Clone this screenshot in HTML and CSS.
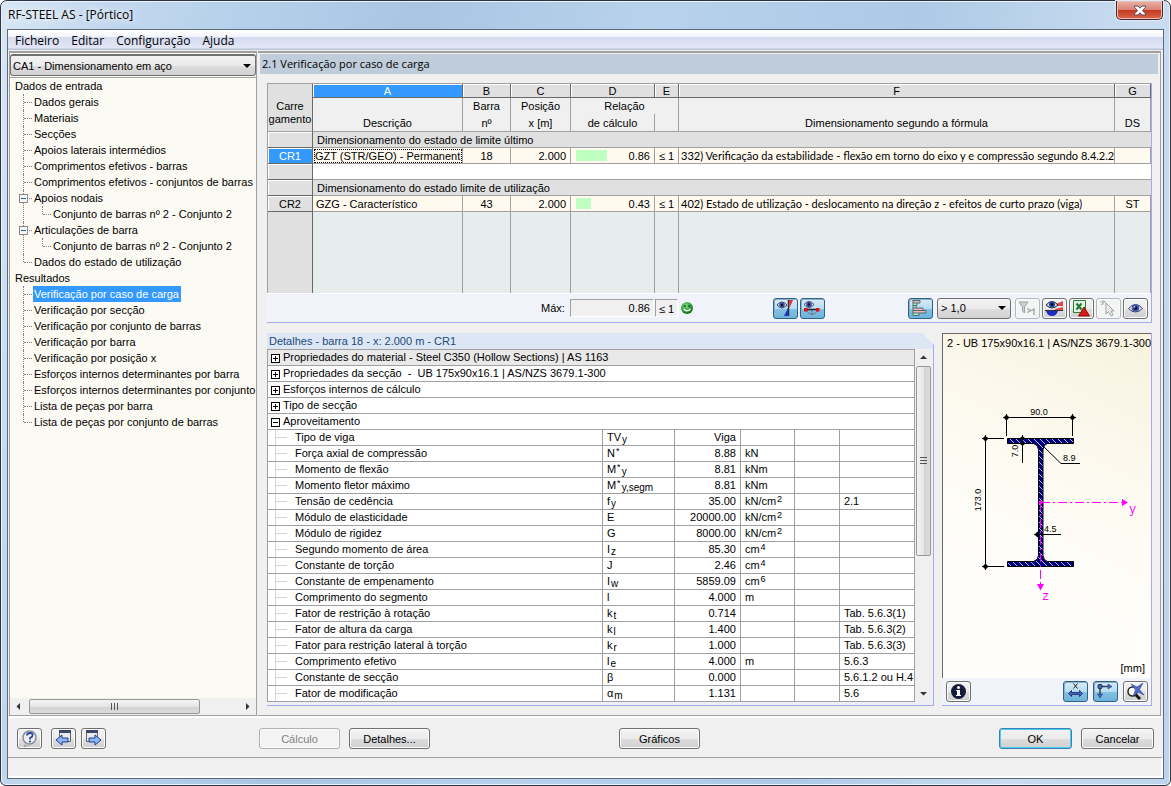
FILE: index.html
```html
<!DOCTYPE html>
<html lang="pt">
<head>
<meta charset="utf-8">
<title>RF-STEEL AS - [Pórtico]</title>
<link rel="stylesheet" href="styles.css">
</head>
<body>
<div class="window">
  <header class="titlebar">
    <h1>RF-STEEL AS - [Pórtico]</h1>
    <button class="close" aria-label="Fechar"><svg width="14" height="11" viewBox="0 0 14 11"><path d="M1.500 1h3.500l2 2.200 2-2.200h3.500v1.200l-3 3.300 3 3.300V10H9L7 7.800 5 10H1.500V8.800l3-3.300-3-3.300z" fill="#fff" stroke="#5a4a58"/></svg></button>
  </header>
  <div class="client">
    <nav class="menu">
      <button>Ficheiro</button><button>Editar</button><button>Configuração</button><button>Ajuda</button>
    </nav>
    <main class="main">
      <aside class="side">
        <select class="case" aria-label="Caso de cálculo"><option>CA1 - Dimensionamento em aço</option></select>
        <div class="treebox">
          <ul class="tree">
            <li><a href="#">Dados de entrada</a>
              <ul class="branch">
                <li><a href="#">Dados gerais</a></li>
                <li><a href="#">Materiais</a></li>
                <li><a href="#">Secções</a></li>
                <li><a href="#">Apoios laterais intermédios</a></li>
                <li><a href="#">Comprimentos efetivos - barras</a></li>
                <li><a href="#">Comprimentos efetivos - conjuntos de barras</a></li>
                <li><button class="fold" aria-label="Recolher Apoios nodais"></button><a href="#">Apoios nodais</a>
                  <ul class="branch leaf"><li><a href="#">Conjunto de barras nº 2 - Conjunto 2</a></li></ul></li>
                <li><button class="fold" aria-label="Recolher Articulações de barra"></button><a href="#">Articulações de barra</a>
                  <ul class="branch leaf"><li><a href="#">Conjunto de barras nº 2 - Conjunto 2</a></li></ul></li>
                <li><a href="#">Dados do estado de utilização</a></li>
              </ul>
            </li>
            <li><a href="#">Resultados</a>
              <ul class="branch">
                <li><a href="#" class="current">Verificação por caso de carga</a></li>
                <li><a href="#">Verificação por secção</a></li>
                <li><a href="#">Verificação por conjunto de barras</a></li>
                <li><a href="#">Verificação por barra</a></li>
                <li><a href="#">Verificação por posição x</a></li>
                <li><a href="#">Esforços internos determinantes por barra</a></li>
                <li><a href="#">Esforços internos determinantes por conjunto</a></li>
                <li><a href="#">Lista de peças por barra</a></li>
                <li><a href="#">Lista de peças por conjunto de barras</a></li>
              </ul>
            </li>
          </ul>
          <div class="hscroll">
            <svg width="17" height="15" viewBox="0 0 17 15"><path d="M10 4v7L6.500 7.500z" fill="#333"/></svg>
            <span class="hthumb"><i></i><i></i><i></i></span>
            <svg class="end" width="17" height="15" viewBox="0 0 17 15"><path d="M7 4v7l3.500-3.500z" fill="#333"/></svg>
          </div>
        </div>
      </aside>

      <section class="content">
        <h2 class="heading">2.1 Verificação por caso de carga</h2>

        <div class="results">
          <table class="grid">
            <colgroup><col class="c-load"><col class="c-a"><col class="c-b"><col class="c-c"><col class="c-d"><col class="c-e"><col><col class="c-g"></colgroup>
            <thead>
              <tr class="letters"><th rowspan="3" class="corner">Carre<br>gamento</th><th class="picked">A</th><th>B</th><th>C</th><th>D</th><th>E</th><th>F</th><th>G</th></tr>
              <tr class="names"><th></th><th>Barra</th><th>Posição</th><th colspan="2">Relação</th><th></th><th></th></tr>
              <tr class="names last"><th>Descrição</th><th>nº</th><th>x [m]</th><th>de cálculo</th><th></th><th>Dimensionamento segundo a fórmula</th><th>DS</th></tr>
            </thead>
            <tbody>
              <tr class="group"><th></th><td colspan="7">Dimensionamento do estado de limite último</td></tr>
              <tr class="data"><th class="picked">CR1</th><td class="focus">GZT (STR/GEO) - Permanent</td><td class="mid">18</td><td class="num">2.000</td><td class="num"><span class="ratio"><span class="bar" style="width:31px"></span>0.86</span></td><td class="mid">≤ 1</td><td class="formula">332) Verificação da estabilidade - flexão em torno do eixo y e compressão segundo 8.4.2.2</td><td></td></tr>
              <tr class="blank"><th></th><td colspan="7"></td></tr>
              <tr class="group"><th></th><td colspan="7">Dimensionamento do estado limite de utilização</td></tr>
              <tr class="data"><th>CR2</th><td>GZG - Característico</td><td class="mid">43</td><td class="num">2.000</td><td class="num"><span class="ratio"><span class="bar" style="width:15px"></span>0.43</span></td><td class="mid">≤ 1</td><td class="formula">402) Estado de utilização - deslocamento na direção z - efeitos de curto prazo (viga)</td><td class="mid">ST</td></tr>
              <tr class="rest"><th></th><td></td><td></td><td></td><td></td><td></td><td></td><td></td></tr>
            </tbody>
          </table>
          <div class="toolbar">
            <label class="max-label" for="max">Máx:</label>
            <input class="max" id="max" value="0.86" readonly>
            <span class="limit">≤ 1</span>
            <svg class="smile" width="14" height="14" viewBox="0 0 14 14"><defs><radialGradient id="gs" cx=".4" cy=".3" r=".7"><stop offset="0" stop-color="#7fe07a"/><stop offset="1" stop-color="#0c6f14"/></radialGradient></defs><circle cx="7" cy="7" r="6" fill="url(#gs)"/><circle cx="4.800" cy="5" r="1" fill="#053"/><circle cx="9.200" cy="5" r="1" fill="#053"/><path d="M3.500 8q3.500 3.500 7 0" fill="none" stroke="#fff" stroke-width="1.200"/></svg>
            <div class="tools views">
              <button class="tool on" aria-label="Mostrar diagrama"><svg width="23" height="19" viewBox="0 0 23 19"><path d="M3 6q5-6 10 0-5 6-10 0z" fill="#dfe6f5" stroke="#445" /><circle cx="8" cy="6" r="2.800" fill="#3b4fb0"/><circle cx="8" cy="6" r="1.200" fill="#111"/><path d="M14.500 1v16" stroke="#333" stroke-width="1.500"/><path d="M15 1h4l-3.500 8z" fill="#e03030"/><path d="M14 9v8h-4z" fill="#2432c8"/></svg></button>
              <button class="tool on" aria-label="Mostrar barra"><svg width="23" height="19" viewBox="0 0 23 19"><path d="M3 5.500q5-6 10 0-5 6-10 0z" fill="#dfe6f5" stroke="#445"/><circle cx="8" cy="5.500" r="2.800" fill="#3b4fb0"/><circle cx="8" cy="5.500" r="1.200" fill="#111"/><path d="M5 11q6 9 12 0M11 11v5" stroke="#678" fill="none"/><path d="M4 10.500h13" stroke="#222" stroke-width="1.500"/><path d="M3 9h3.500v3.500H3zM15 9h3.500v3.500H15z" fill="#e01010"/></svg></button>
            </div>
            <div class="tools right">
              <button class="tool on" aria-label="Barras de relação"><svg width="23" height="19" viewBox="0 0 23 19"><path d="M4 1.500h7v2.500H4zM4 9h10v2.500H4zM4 11.500h13v2.500H4z" fill="#f6b5ac"/><path d="M4 4h4v2.500H4zM4 6.500h3v2.500H4zM4 14h6v2.500H4z" fill="#b5eebe"/><path d="M4 1v15.500M4 1.500h7V4H4M8 4v2.500H4M7 6.500V9H4M7 9h7v2.500H4M14 11.500h3V14H4M10 14v2.500H4" fill="none" stroke="#4b6a78"/></svg></button>
              <select class="filter" aria-label="Filtro de relação"><option>&gt; 1,0</option></select>
              <button class="tool off" disabled aria-label="Filtrar"><svg width="23" height="19" viewBox="0 0 23 19"><path d="M3 3h9L8.500 8v6L6.500 12V8z" fill="#ccc" stroke="#999"/><path d="M11 9.500l4 2-4 2M18 16v-6l-2 1.500" fill="none" stroke="#999" stroke-width="1.300"/></svg></button>
              <button class="tool" aria-label="Cores"><svg width="23" height="19" viewBox="0 0 23 19"><path d="M13 5l7-3v5h-7zM12 10l8-2v4h-8z" fill="#e04848"/><path d="M3 6q6-7 12 0-6 6-12 0z" fill="#cfd9f2" stroke="#223"/><circle cx="9" cy="5.500" r="3" fill="#2b46a8"/><circle cx="9" cy="5.500" r="1.300" fill="#001"/><path d="M2 11.500h18" stroke="#333"/><path d="M3 12h12q-1.500 5-6 5T3 12z" fill="#1c2fc4"/></svg></button>
              <button class="tool" aria-label="Exportar para Excel"><svg width="23" height="19" viewBox="0 0 23 19"><path d="M3.500 1.500h12v12h-12z" fill="#e4f2e4" stroke="#2f7d3b"/><path d="M6.500 4.500l5 6M11.500 4.500l-5 6" stroke="#1d7a2e" stroke-width="2"/><path d="M14 8l5.500 9h-11z" fill="#d81818" stroke="#811"/></svg></button>
              <button class="tool off" disabled aria-label="Selecionar"><svg width="23" height="19" viewBox="0 0 23 19"><path d="M9 4v11l2.500-2.500L14 17l2-1-2-4h3z" fill="#eee" stroke="#999"/><path d="M3 3h6M6 1v5M4 6l4-4" stroke="#aaa"/></svg></button>
              <button class="tool" aria-label="Modo de visualização"><svg width="23" height="19" viewBox="0 0 23 19"><path d="M4.500 9.500q7-8 14 0-7 7-14 0z" fill="#e6ebf5" stroke="#445"/><circle cx="11.500" cy="9" r="3.800" fill="#3b55b8"/><circle cx="11.500" cy="9" r="1.800" fill="#0a0a22"/><circle cx="10.500" cy="8" r=".8" fill="#fff"/></svg></button>
            </div>
          </div>
        </div>

        <div class="lower">
          <section class="details">
            <h3>Detalhes - barra 18 - x: 2.000 m - CR1</h3>
            <div class="scrollwrap">
              <table class="props">
                <colgroup><col><col class="p-sym"><col class="p-val"><col class="p-unit"><col class="p-gap"><col class="p-ref"></colgroup>
                <tbody>
                  <tr class="sec shade"><td colspan="6"><button class="pm plus" aria-label="Expandir"></button>Propriedades do material - Steel C350 (Hollow Sections) | AS 1163</td></tr>
                  <tr class="sec"><td colspan="6"><button class="pm plus" aria-label="Expandir"></button>Propriedades da secção &nbsp;- &nbsp;UB 175x90x16.1 | AS/NZS 3679.1-300</td></tr>
                  <tr class="sec"><td colspan="6"><button class="pm plus" aria-label="Expandir"></button>Esforços internos de cálculo</td></tr>
                  <tr class="sec"><td colspan="6"><button class="pm plus" aria-label="Expandir"></button>Tipo de secção</td></tr>
                  <tr class="sec"><td colspan="6"><button class="pm" aria-label="Recolher"></button>Aproveitamento</td></tr>
                  <tr><td>Tipo de viga</td><td>TV<sub>y</sub></td><td>Viga</td><td></td><td></td><td></td></tr>
                  <tr><td>Força axial de compressão</td><td>N<sup>*</sup></td><td>8.88</td><td>kN</td><td></td><td></td></tr>
                  <tr><td>Momento de flexão</td><td>M<sup>*</sup><sub>y</sub></td><td>8.81</td><td>kNm</td><td></td><td></td></tr>
                  <tr><td>Momento fletor máximo</td><td>M<sup>*</sup><sub>y,segm</sub></td><td>8.81</td><td>kNm</td><td></td><td></td></tr>
                  <tr><td>Tensão de cedência</td><td>f<sub>y</sub></td><td>35.00</td><td>kN/cm<sup>2</sup></td><td></td><td>2.1</td></tr>
                  <tr><td>Módulo de elasticidade</td><td>E</td><td>20000.00</td><td>kN/cm<sup>2</sup></td><td></td><td></td></tr>
                  <tr><td>Módulo de rigidez</td><td>G</td><td>8000.00</td><td>kN/cm<sup>2</sup></td><td></td><td></td></tr>
                  <tr><td>Segundo momento de área</td><td>I<sub>z</sub></td><td>85.30</td><td>cm<sup>4</sup></td><td></td><td></td></tr>
                  <tr><td>Constante de torção</td><td>J</td><td>2.46</td><td>cm<sup>4</sup></td><td></td><td></td></tr>
                  <tr><td>Constante de empenamento</td><td>I<sub>w</sub></td><td>5859.09</td><td>cm<sup>6</sup></td><td></td><td></td></tr>
                  <tr><td>Comprimento do segmento</td><td>l</td><td>4.000</td><td>m</td><td></td><td></td></tr>
                  <tr><td>Fator de restrição à rotação</td><td>k<sub>t</sub></td><td>0.714</td><td></td><td></td><td>Tab. 5.6.3(1)</td></tr>
                  <tr><td>Fator de altura da carga</td><td>k<sub>l</sub></td><td>1.400</td><td></td><td></td><td>Tab. 5.6.3(2)</td></tr>
                  <tr><td>Fator para restrição lateral à torção</td><td>k<sub>r</sub></td><td>1.000</td><td></td><td></td><td>Tab. 5.6.3(3)</td></tr>
                  <tr><td>Comprimento efetivo</td><td>l<sub>e</sub></td><td>4.000</td><td>m</td><td></td><td>5.6.3</td></tr>
                  <tr><td>Constante de secção</td><td>β</td><td>0.000</td><td></td><td></td><td>5.6.1.2 ou H.4</td></tr>
                  <tr><td>Fator de modificação</td><td>α<sub>m</sub></td><td>1.131</td><td></td><td></td><td>5.6</td></tr>
                </tbody>
              </table>
              <div class="vscroll">
                <svg width="15" height="17" viewBox="0 0 15 17"><path d="M4 10h7L7.500 6.500z" fill="#333"/></svg>
                <span class="vthumb"><i></i><i></i><i></i></span>
                <svg class="end" width="15" height="17" viewBox="0 0 15 17"><path d="M4 7h7l-3.500 3.500z" fill="#333"/></svg>
              </div>
            </div>
          </section>

          <section class="graphic">
            <div class="canvas">
              <p class="caption">2 - UB 175x90x16.1 | AS/NZS 3679.1-300</p>
              <svg class="profile" width="207" height="300" viewBox="943 353 207 300">
                <defs><pattern id="hatch" width="6" height="6" patternUnits="userSpaceOnUse"><path d="M0 0l6 6M-1 5l2 2M5-1l2 2" stroke="#b8bce8" stroke-width="1"/></pattern></defs>
                <path d="M1007.500 439.500h66v5h-26q-4 1-4.500 6v106q.5 5 4.500 6h26v5h-66v-5h26q4.500-1 5-6v-106q-.5-5-5-6h-26z" fill="#00007c"/>
                <path d="M1007.500 439.500h66v5h-26q-4 1-4.500 6v106q.5 5 4.500 6h26v5h-66v-5h26q4.500-1 5-6v-106q-.5-5-5-6h-26z" fill="url(#hatch)" stroke="#000"/>
                <g stroke="#000" fill="none">
                  <path d="M1003 418.500h73M1006.500 415v22M1072.500 415v22M985.500 436v135M982 439.500h22M982 567.500h22M1022.500 436v28M1043 447l18 17.500h19M1034 535.500h27"/>
                </g>
                <g fill="#000"><path d="M1006.500 415.500l3 3-3 3-3-3zM1072.500 415.500l3 3-3 3-3-3zM985.500 436.500l3 3-3 3-3-3zM985.500 564.500l3 3-3 3-3-3zM1022.500 437l3 2.500-3 2.500-3-2.500zM1022.500 442l3 2.500-3 2.500-3-2.500zM1037.500 532.500l3 3-3 3-3-3z"/></g>
                <g class="dims">
                  <text x="1039" y="416" text-anchor="middle">90.0</text>
                  <text x="1063" y="462">8.9</text>
                  <text x="1044" y="533">4.5</text>
                  <text text-anchor="middle" transform="translate(981 501) rotate(-90)">173.0</text>
                  <text text-anchor="middle" transform="translate(1018 452) rotate(-90)">7.0</text>
                </g>
                <g stroke="#f0f" fill="none"><path d="M1041 503.500h81M1040.500 503v82" stroke-dasharray="9 3 2 3"/></g>
                <g fill="#f0f"><circle cx="1040.500" cy="503.500" r="2"/><path d="M1122 500v7l6-3.500zM1037 585h7l-3.500 6.500z"/></g>
                <g class="axes"><text x="1129" y="514">y</text><text x="1042" y="601">z</text></g>
              </svg>
              <p class="units">[mm]</p>
            </div>
            <div class="gtools">
              <button class="tool info" aria-label="Informação"><svg width="23" height="19" viewBox="0 0 23 19"><circle cx="11.500" cy="9.500" r="7.500" fill="#141c3c"/><circle cx="11.500" cy="5.500" r="1.500" fill="#fff"/><path d="M9 8h4v5h1v1H9v-1h1V9H9z" fill="#fff"/></svg></button>
              <button class="tool on" aria-label="Dimensões"><svg width="23" height="19" viewBox="0 0 23 19"><path d="M9.500 1.500l4 5M13.500 1.500l-4 5" stroke="#222"/><path d="M4.500 11.500l3-3v2h8v-2l3 3-3 3v-2h-8v2z" fill="#4a66c0" stroke="#233a7a"/></svg></button>
              <button class="tool on" aria-label="Eixos"><svg width="23" height="19" viewBox="0 0 23 19"><path d="M5.500 4.500H15M6 5v8" stroke="#345" stroke-width="1.500"/><path d="M14 2l4 2.500L14 7zM3.500 12h5L6 16z" fill="#4a66c0" stroke="#233a7a" stroke-width=".6"/><rect x="4" y="2.500" width="4" height="4" rx="1" fill="#4a66c0" stroke="#234"/></svg></button>
              <button class="tool" aria-label="Repor zoom"><svg width="23" height="19" viewBox="0 0 23 19"><circle cx="8.500" cy="9.500" r="4.500" fill="#fff" stroke="#222" stroke-width="1.500"/><path d="M12 13l4 4" stroke="#111" stroke-width="3"/><path d="M7 2l6 3 6-4-3.500 6.500L20 13l-6-3-5 4 2.500-6z" fill="#4f6ad0" stroke="#33488f" stroke-width=".6"/></svg></button>
            </div>
          </section>
        </div>
      </section>
    </main>

    <footer class="actions">
      <button class="tool help" aria-label="Ajuda"><svg width="23" height="19" viewBox="0 0 23 19"><circle cx="11.500" cy="8.500" r="6.500" fill="#eef0f6" stroke="#8a8f9c" stroke-width="1.500"/><path d="M8 14l-2 4 6-2.500z" fill="#c4c8d2" stroke="#8a8f9c" stroke-width=".6"/><path d="M9 6.500q0-2.500 3-2.500t2.500 2.500q0 1.500-2.500 2.500v1.500" fill="none" stroke="#2c4690" stroke-width="1.800"/><circle cx="12" cy="12.500" r="1.100" fill="#2c4690"/></svg></button>
      <button class="tool prev" aria-label="Anterior"><svg width="23" height="19" viewBox="0 0 23 19"><path d="M7.500 1.500h11v11h-11z" fill="#e8eaf0" stroke="#666"/><path d="M7 1h12v3H7z" fill="#3c4668"/><path d="M4 11l6-5v3h6v4h-6v3z" fill="#8fb4f4" stroke="#1f3f94"/></svg></button>
      <button class="tool next" aria-label="Seguinte"><svg width="23" height="19" viewBox="0 0 23 19"><path d="M4.500 1.500h11v11h-11z" fill="#e8eaf0" stroke="#666"/><path d="M4 1h12v3H4z" fill="#3c4668"/><path d="M19 11l-6-5v3H7v4h6v3z" fill="#8fb4f4" stroke="#1f3f94"/></svg></button>
      <button class="btn calc" disabled>Cálculo</button>
      <button class="btn">Detalhes...</button>
      <button class="btn charts">Gráficos</button>
      <button class="btn ok">OK</button>
      <button class="btn cancel">Cancelar</button>
    </footer>
    <div class="status"></div>
  </div>
</div>
</body>
</html>
```
FILE: styles.css
```css
* { box-sizing: border-box; }

:root {
  --ui: "Open Sans", "Noto Sans", sans-serif;
  --text: "Liberation Sans", Arial, sans-serif;
  --line: #a0a0a0;
  --pick: #3399ff;
  --violet: #a8a8ea;
}

body { margin: 0; background: #fff; color: #000; font: 11px/16px var(--text); }
h1, h2, h3, p, ul { margin: 0; padding: 0; font-weight: normal; }
ul { list-style: none; }
a { color: inherit; text-decoration: none; }
button, select, input { font: inherit; color: inherit; margin: 0; }
svg { display: block; }
table { border-collapse: separate; border-spacing: 0; table-layout: fixed; width: 100%; }

/* window frame */
.window {
  min-height: 100vh;
  display: flex;
  flex-direction: column;
  padding: 0 6px 6px;
  border: 1px solid #2b3440;
  border-radius: 7px 7px 6px 6px;
  background: linear-gradient(100deg, #d8e6f4 0, #c3d8ee 8%, #b4cfea 20%, #a9c5e2 32%, #b8d2ec 50%, #adc9e6 70%, #c9dcf0 88%, #bcd3ec 100%);
  box-shadow: inset 0 0 0 1px #eaf3fb;
}
.titlebar { display: flex; justify-content: space-between; height: 28px; }
.titlebar h1 {
  font: 12px/28px var(--ui);
  padding: 0 20px 0 1px;
  text-shadow: 0 0 8px #fff, 0 0 8px #fff;
}
.close {
  width: 47px;
  height: 19px;
  margin-right: 1px;
  padding: 0;
  display: grid;
  place-items: center;
  border: 1px solid #4a2230;
  border-top: 0;
  border-radius: 0 0 5px 5px;
  background: linear-gradient(#eab3a8, #d98474 48%, #c23a20 50%, #d9684c);
  box-shadow: inset 0 0 0 1px #f0bfb4, 0 0 0 1px #dcebf8;
}
.client {
  flex: 1;
  display: flex;
  flex-direction: column;
  border: 1px solid #5c6c7c;
  background: #f0f0f0;
}

/* menu */
.menu {
  display: flex;
  height: 20px;
  padding-left: 2px;
  background: linear-gradient(#fff 0, #f2f5fb 35%, #d5dbf0 36%, #e2e6f5 92%, #b9c3d8 93%);
}
.menu button { padding: 0 5px; margin-right: 2px; border: 0; background: none; font: 12px/19px var(--ui); }

/* main split */
.main {
  flex: 1;
  display: grid;
  grid-template-columns: 248px minmax(0, 1fr);
  column-gap: 1px;
  padding: 1px 2px 0 1px;
  border-bottom: 2px solid #fff;
}
.side, .content { border: 1px solid var(--line); border-top-width: 2px; }
.side { display: flex; flex-direction: column; background: #fcfbf3; }

select {
  appearance: none;
  border: 1px solid #707070;
  border-radius: 3px;
  background:
    url("data:image/svg+xml,%3Csvg xmlns='http://www.w3.org/2000/svg' width='8' height='4'%3E%3Cpath d='M0 0h8L4 4z'/%3E%3C/svg%3E") right 4px center no-repeat,
    linear-gradient(#f3f3f3, #ebebeb 50%, #dddddd 51%, #d2d2d2);
}
.case { height: 22px; margin: 1px 0 0; padding: 0 2px; border-width: 2px 1px 1px 1px; }
.treebox { flex: 1; display: flex; flex-direction: column; margin-top: 1px; border-top: 1px solid var(--line); overflow: hidden; }
.tree { flex: 1; padding-left: 4px; white-space: nowrap; }
.tree a { display: inline-block; height: 16px; padding: 0 2px 0 1px; vertical-align: top; }
.tree .current { background: var(--pick); color: #fff; }
.branch { margin-left: 8px; }
.branch li { position: relative; padding-left: 11px; }
.branch li::before { content: ""; position: absolute; left: 1px; top: 0; bottom: 0; border-left: 1px dotted #808080; }
.branch li:last-child::before { bottom: auto; height: 8px; }
.branch li::after { content: ""; position: absolute; left: 2px; top: 8px; width: 8px; border-top: 1px dotted #808080; }
.fold {
  position: absolute;
  z-index: 1;
  left: -3px;
  top: 4px;
  width: 9px;
  height: 9px;
  padding: 0;
  border: 1px solid #8c8c8c;
  background: linear-gradient(#3a5a9c, #3a5a9c) center / 5px 1px no-repeat, #f4f4f4;
}

/* scrollbars */
.hscroll { display: flex; align-items: center; height: 17px; background: #f0f0f0; }
.hthumb {
  display: flex; justify-content: center; align-items: center; gap: 1px;
  width: 171px; height: 15px; margin-left: 2px;
  border: 1px solid #979797; border-radius: 2px;
  background: linear-gradient(#f4f4f4, #e6e6e6 50%, #d2d2d2 51%, #dcdcdc);
}
.hthumb i { width: 2px; height: 7px; border-left: 1px solid #555; }
.hscroll .end { margin-left: auto; }
.vscroll { display: flex; flex-direction: column; width: 17px; padding-left: 1px; background: #f0f0f0; }
.vthumb {
  display: flex; flex-direction: column; justify-content: center; align-items: center; gap: 1px;
  height: 190px; width: 15px;
  border: 1px solid #979797; border-radius: 2px;
  background: linear-gradient(90deg, #f4f4f4, #e6e6e6 50%, #d2d2d2 51%, #dcdcdc);
}
.vthumb i { width: 7px; height: 2px; border-top: 1px solid #555; }
.vscroll .end { margin-top: auto; }

/* content */
.content { display: flex; flex-direction: column; border-left: 0; min-width: 0; }
.heading { margin: 1px 2px 0; padding: 0 2px; background: #bfccd9; font: 11px/20px var(--ui); }
.results {
  margin: 9px 8px 0 9px;
  border-right: 1px solid var(--violet);
  border-bottom: 1px solid var(--violet);
  overflow: hidden;
}

.grid { border-top: 1px solid var(--line); border-left: 1px solid var(--line); font: 11px/14px var(--text); white-space: nowrap; }
.c-load { width: 45px; } .c-a { width: 150px; } .c-b { width: 48px; } .c-c { width: 60px; }
.c-d { width: 84px; } .c-e { width: 24px; } .c-g { width: 36px; }
.grid th, .grid td { height: 16px; padding: 0 3px; border-right: 1px solid var(--line); border-bottom: 1px solid var(--line); overflow: hidden; font-weight: normal; text-align: left; }
.grid th { background: #e0e0e0; text-align: center; }
.grid .letters th { height: 14px; line-height: 12px; border-color: #696969; box-shadow: inset 1px 1px #fff; }
.grid .letters .corner { padding: 10px 0 0; line-height: 13px; border-color: #696969; border-bottom-color: var(--line); box-shadow: none; }
.grid .names th { height: 16px; background: #f0f0f0; border-bottom: 0; line-height: 16px; }
.grid .last th { height: 18px; border-bottom: 1px solid var(--line); }
.grid tbody th { border-color: #696969; box-shadow: inset 1px 1px #fff; }
.grid .group td { background: #e0e0e0; padding-left: 4px; border-right: 0; }
.grid .blank td { background: #fff; border-right: 0; }
.grid .data td { background: #fffaf0; }
.grid .data .mid, .grid .data .num { text-align: center; padding: 0; }
.grid .data .num { text-align: right; padding-right: 4px; }
.grid .data .focus { padding: 0 0 0 2px; outline: 1px dotted #000; outline-offset: -2px; }
.grid .data .formula { padding: 0 0 0 2px; font-family: Lato, var(--text); }
.grid .picked, .grid .letters .picked { background: var(--pick); color: #fff; }
.ratio { display: flex; justify-content: space-between; align-items: center; padding-left: 5px; }
.bar { height: 11px; background: #bfffbf; }
.grid .rest th, .grid .rest td { height: 81px; background: #e6edec; border-bottom: 0; }
.grid .rest th { background: #e0e0e0; box-shadow: none; }

.toolbar { display: flex; align-items: center; height: 29px; padding-right: 3px; background: #f0f4fa; border-top: 1px solid #fff; }
.max-label { margin-left: 274px; width: 29px; }
.max { width: 84px; height: 18px; padding: 0 3px; border: 1px solid; border-color: var(--line) #fff #fff var(--line); border-radius: 0; background: #f0f0f0; text-align: right; }
.limit { width: 23px; height: 18px; border: 1px solid; border-color: var(--line) #fff #fff var(--line); background: #f0f0f0; text-align: center; line-height: 18px; margin-left: 1px; }
.smile { margin-left: 2px; }
.tools { display: flex; gap: 2px; }
.views { margin-left: 79px; }
.right { margin-left: auto; }
.tool {
  width: 25px; height: 21px; padding: 0; border: 1px solid #707070; border-radius: 3px;
  background: linear-gradient(#f3f3f3, #ebebeb 50%, #dddddd 51%, #cfcfcf);
  box-shadow: inset 0 0 0 1px #fbfbfb;
  overflow: hidden;
}
.tool.on { border-color: #2c628b; background: linear-gradient(#d9ecf7, #b5dcf0 50%, #84c2e2 51%, #6cb3da); box-shadow: inset 1px 1px #8fb0c4; }
.tool.off { border-color: #adb2b5; background: #f4f4f4; opacity: .9; }
.filter { width: 74px; height: 21px; margin: 0 2px; padding: 0 3px; }

/* details */
.lower { flex: 1; display: grid; grid-template-columns: minmax(0, 1fr) 210px; column-gap: 8px; margin: 10px 8px 9px 9px; }
.details { border-right: 1px solid var(--violet); border-bottom: 1px solid var(--violet); background: #eceff6; min-width: 0; clip-path: polygon(0 0, calc(100% - 12px) 0, 100% 12px, 100% 100%, 0 100%); }
.details h3 { background: #dde6f4; color: #1c4a7c; font: 11px/16px var(--text); padding: 0 2px; }
.scrollwrap { display: grid; grid-template-columns: minmax(0, 1fr) 18px; }
.props { border-top: 1px solid var(--line); border-left: 1px solid var(--line); background: #fff; white-space: nowrap; }
.p-sym { width: 72px; } .p-val { width: 66px; } .p-unit { width: 54px; } .p-gap { width: 45px; } .p-ref { width: 75px; }
.props td { height: 16px; padding: 0 0 0 4px; border-right: 1px solid var(--line); border-bottom: 1px solid var(--line); overflow: hidden; font: 11px/15px var(--text); }
.props td:first-child {
  padding-left: 27px;
  background:
    linear-gradient(#d4d4d4, #d4d4d4) 7px 0 / 1px 100% no-repeat,
    linear-gradient(#d4d4d4, #d4d4d4) 7px 7px / 12px 1px no-repeat;
}
.props td:nth-child(3) { text-align: right; padding-right: 4px; }
.props .sec td:first-child { padding-left: 3px; background: #fff; }
.props .shade td:first-child { background: #e9e9e9; }
sub, sup { font-size: 10px; line-height: 0; padding-left: 1px; vertical-align: -2px; }
sup { font-size: 9px; vertical-align: 3px; }
.pm {
  width: 9px; height: 9px; margin-right: 3px; padding: 0; border: 1px solid #000; border-radius: 0; vertical-align: -1px;
  background: linear-gradient(#000, #000) center / 5px 1px no-repeat, #fff;
}
.pm.plus { background: linear-gradient(#000, #000) center / 5px 1px no-repeat, linear-gradient(#000, #000) center / 1px 5px no-repeat, #fff; }

/* cross-section graphic */
.graphic { display: flex; flex-direction: column; border-right: 1px solid var(--violet); border-bottom: 1px solid var(--violet); min-width: 0; }
.canvas {
  flex: 1; display: flex; flex-direction: column;
  border: 1px solid #696969; border-width: 1px 0 0 1px;
  background: linear-gradient(205deg, #f8f2de, #fdfaf1 40%, #fffefb 75%);
  overflow: hidden;
}
.caption { padding-left: 4px; line-height: 18px; white-space: nowrap; }
.units { margin-top: auto; padding-right: 6px; line-height: 20px; text-align: right; }
.dims { font: 9px var(--text); }
.axes { font: 12px "Liberation Mono", monospace; fill: #f0f; }
.gtools { display: flex; gap: 5px; padding: 3px 3px 3px 4px; background: #f0f4fa; }
.gtools .info { margin-right: auto; }

/* footer */
.actions { display: flex; align-items: center; height: 39px; padding: 2px 9px 0; }
.prev { margin-left: 9px; }
.next { margin-left: 5px; }
.btn { width: 81px; height: 21px; padding: 0; border: 1px solid #707070; border-radius: 3px; background: linear-gradient(#f3f3f3, #ebebeb 50%, #dddddd 51%, #cfcfcf); box-shadow: inset 0 0 0 1px #fbfbfb; }
.calc { margin: 0 9px 0 153px; }
.btn:disabled { border-color: #adb2b5; background: #f4f4f4; color: #838383; }
.charts { margin-left: 189px; }
.ok { width: 73px; margin-left: auto; border-color: #3c7fb1; box-shadow: inset 0 0 0 1px #48cdf5; }
.cancel { width: 73px; margin-left: 9px; }
.status { height: 21px; border-top: 1px solid var(--line); border-right: 2px solid #fff; border-bottom: 2px solid #fff; }
```
